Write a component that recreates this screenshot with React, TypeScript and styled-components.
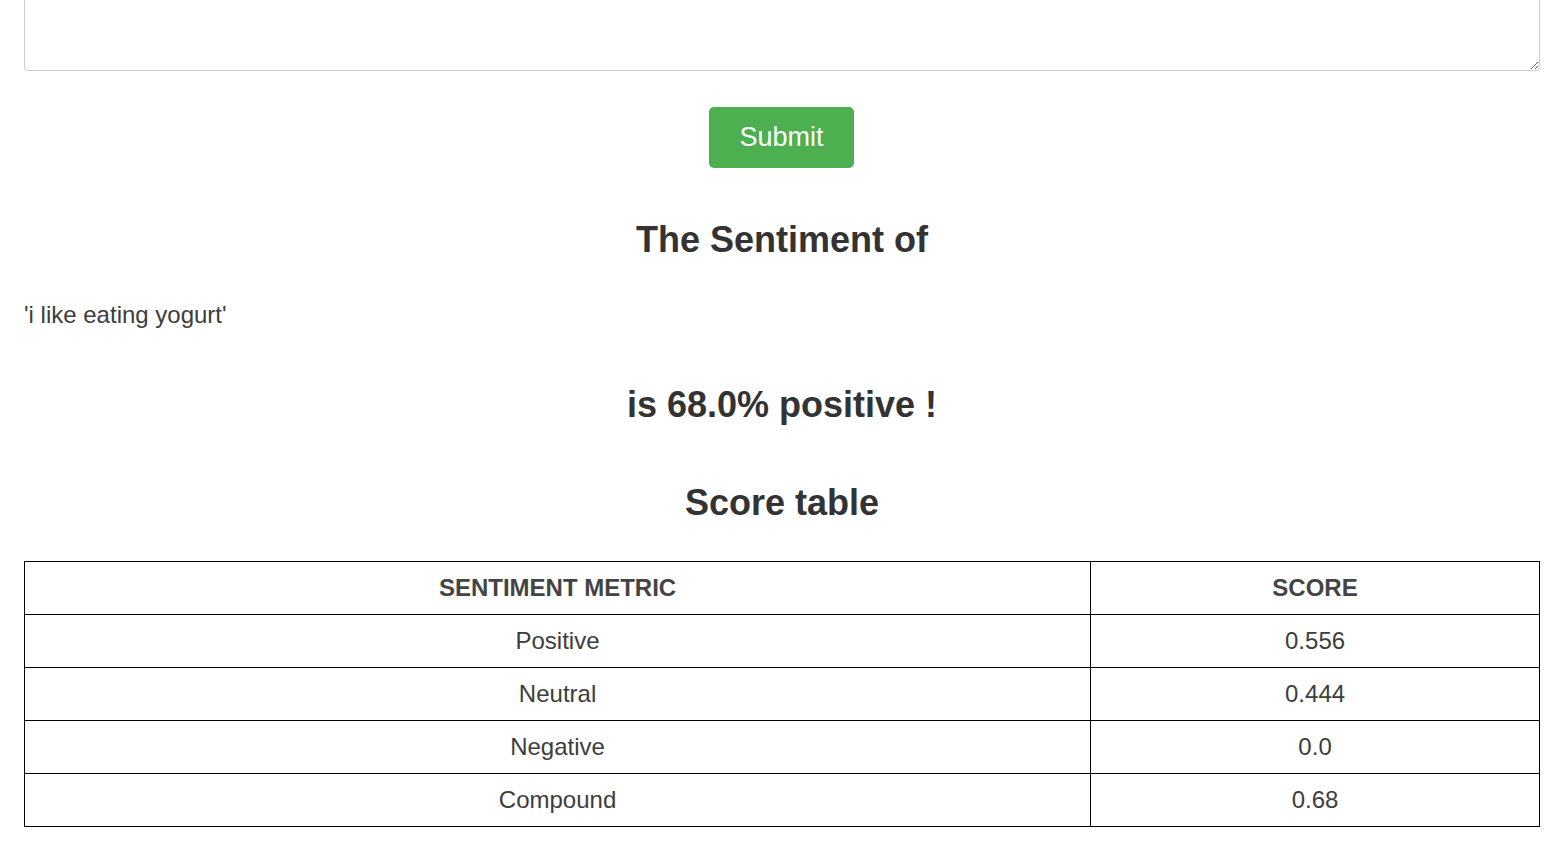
import React from "react";
import styled, { createGlobalStyle } from "styled-components";

const Global = createGlobalStyle`
  html, body { margin: 0; padding: 0; background: #fff; }
  body { font-family: "Liberation Sans", Arial, Helvetica, sans-serif; color: #333; overflow: hidden; }
  * { box-sizing: border-box; }
`;

const Page = styled.div`
  padding: 0 27px 0 24px;
`;

const TextArea = styled.textarea`
  display: block;
  width: 100%;
  height: 200px;
  margin-top: -129px;
  border: 1px solid #ccc;
  border-radius: 4px;
  font-family: "Liberation Sans", Arial, sans-serif;
  font-size: 24px;
  resize: vertical;
  outline: none;
`;

const ButtonRow = styled.div`
  display: flex;
  justify-content: center;
  margin-top: 36px;
  padding-right: 1px;
`;

const SubmitButton = styled.button`
  width: 145px;
  height: 61px;
  display: flex;
  align-items: center;
  justify-content: center;
  background: #4caf50;
  color: #fff;
  border: none;
  border-radius: 5px;
  font-family: "Liberation Sans", Arial, sans-serif;
  font-size: 27px;
  padding: 0;
  cursor: pointer;
`;

const Heading = styled.h2<{ $gap: number }>`
  margin: ${(p) => p.$gap}px 0 0;
  font-size: 36px;
  line-height: 39.6px;
  font-weight: 700;
  text-align: center;
  color: #333;
`;

const Quote = styled.p`
  margin: 37px 0 0;
  font-size: 24px;
  line-height: 36px;
  color: #3d3d3d;
`;

const Table = styled.table`
  width: 100%;
  margin-top: 38px;
  border-collapse: collapse;
  border: 1px solid #000;
  font-size: 24px;
`;

const HeadCell = styled.th<{ $w?: string }>`
  width: ${(p) => p.$w ?? "auto"};
  height: 53px;
  padding: 0;
  border: 1px solid #000;
  text-align: center;
  font-weight: 700;
  text-transform: uppercase;
  color: #444;
`;

const Cell = styled.td`
  height: 53px;
  padding: 0;
  border: 1px solid #000;
  text-align: center;
  color: #3d3d3d;
`;

const rows: [string, string][] = [
  ["Positive", "0.556"],
  ["Neutral", "0.444"],
  ["Negative", "0.0"],
  ["Compound", "0.68"],
];

export default function App() {
  return (
    <>
      <Global />
      <Page>
        <TextArea defaultValue="" />
        <ButtonRow>
          <SubmitButton>Submit</SubmitButton>
        </ButtonRow>
        <Heading $gap={52}>The Sentiment of</Heading>
        <Quote>'i like eating yogurt'</Quote>
        <Heading $gap={52}>is 68.0% positive !</Heading>
        <Heading $gap={59}>Score table</Heading>
        <Table>
          <thead>
            <tr>
              <HeadCell $w="70.37%">Sentiment Metric</HeadCell>
              <HeadCell>Score</HeadCell>
            </tr>
          </thead>
          <tbody>
            {rows.map(([m, s]) => (
              <tr key={m}>
                <Cell>{m}</Cell>
                <Cell>{s}</Cell>
              </tr>
            ))}
          </tbody>
        </Table>
      </Page>
    </>
  );
}
